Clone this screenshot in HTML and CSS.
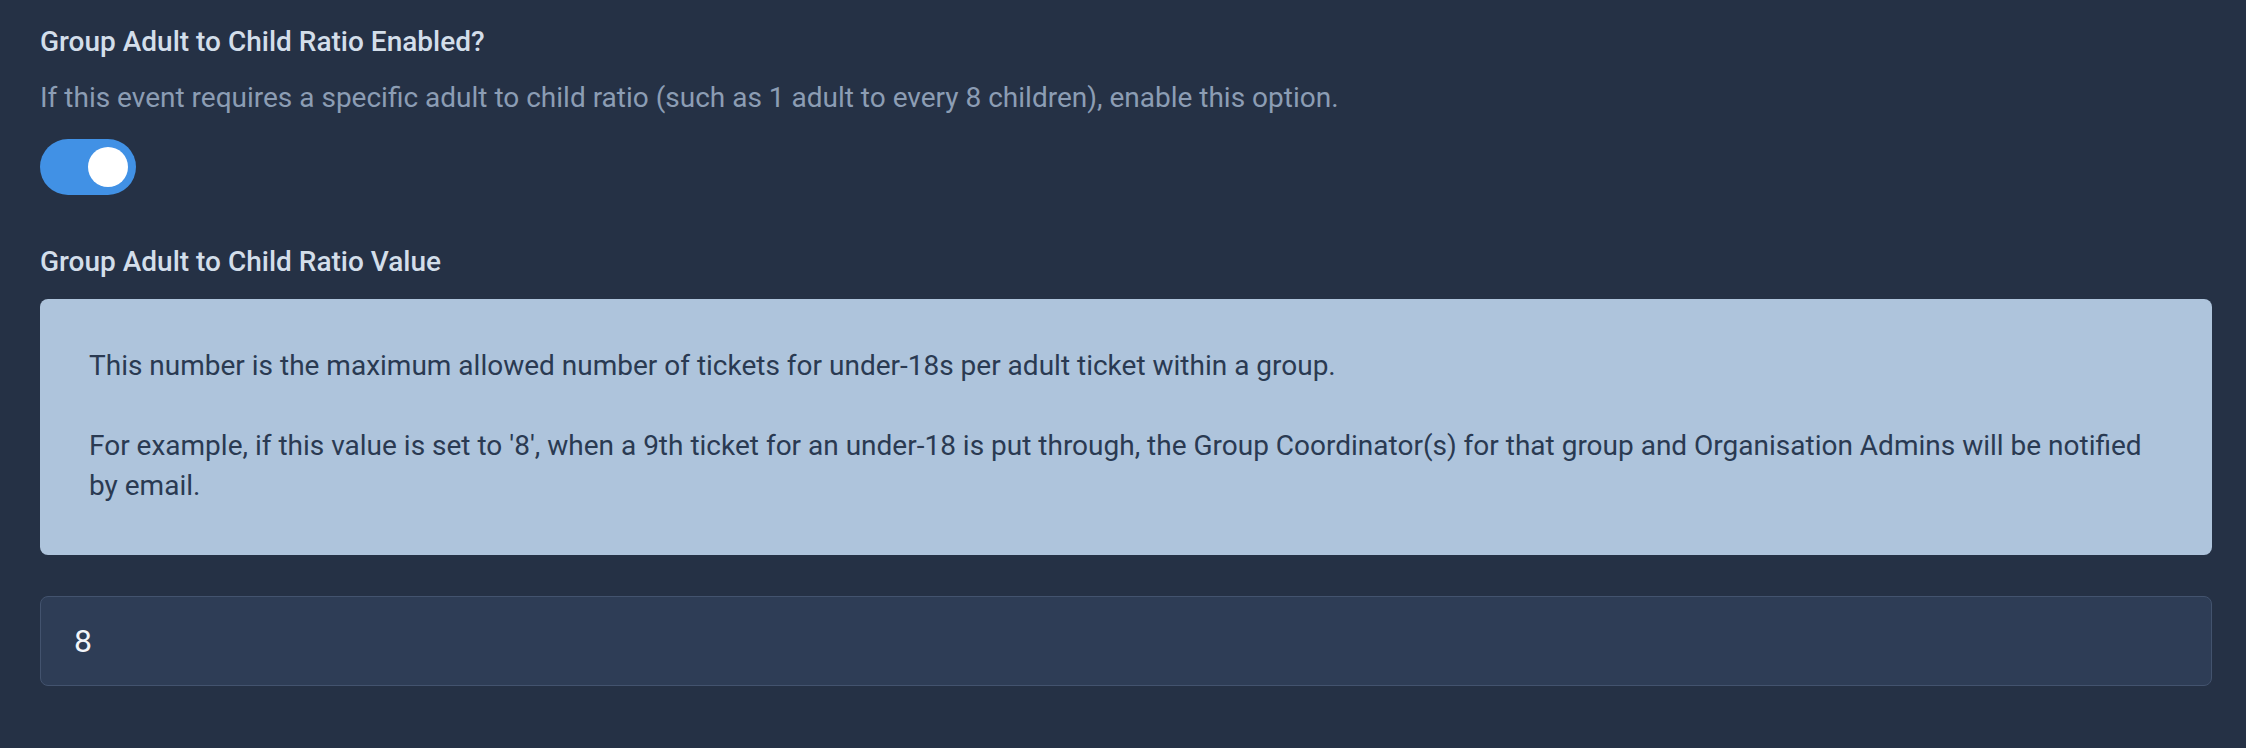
FILE: index.html
```html
<!DOCTYPE html>
<html lang="en">
<head>
<meta charset="utf-8">
<title>Group ratio settings</title>
<link rel="stylesheet" href="styles.css">
</head>
<body>
<main class="page">
  <section class="field field-toggle">
    <label class="field-label" for="ratio-enabled">Group Adult to Child Ratio Enabled?</label>
    <p class="field-help">If this event requires a specific adult to child ratio (such as 1 adult to every 8 children), enable this option.</p>
    <div class="switch" id="ratio-enabled" role="switch" aria-checked="true"><span class="switch-knob"></span></div>
  </section>
  <section class="field field-value">
    <label class="field-label" for="ratio-value">Group Adult to Child Ratio Value</label>
    <div class="info-box">
      <p class="info-para">This number is the maximum allowed number of tickets for under-18s per adult ticket within a group.</p>
      <p class="info-para">For example, if this value is set to '8', when a 9th ticket for an under-18 is put through, the Group Coordinator(s) for that group and Organisation Admins will be notified by email.</p>
    </div>
    <div class="text-input" id="ratio-value">8</div>
  </section>
</main>
</body>
</html>
```
FILE: styles.css
```css
html, body {
  margin: 0;
  padding: 0;
  background: #253145;
}
body {
  font-family: Roboto, "Liberation Sans", Arial, sans-serif;
  width: 2246px;
  height: 748px;
  overflow: hidden;
}
.page {
  padding: 22px 34px 0 40px;
  display: flex;
  flex-direction: column;
}
.field {
  display: flex;
  flex-direction: column;
}
.field-label {
  font-size: 28px;
  font-weight: 500;
  line-height: 40px;
  color: #d3deea;
}
.field-help {
  margin: 16px 0 0;
  font-size: 28px;
  line-height: 40px;
  color: #8c9db4;
}
.switch {
  margin-top: 21px;
  width: 96px;
  height: 56px;
  border-radius: 28px;
  background: #4191e5;
  display: flex;
  align-items: center;
  justify-content: flex-end;
  padding-right: 8px;
  box-sizing: border-box;
}
.switch-knob {
  width: 40px;
  height: 40px;
  border-radius: 50%;
  background: #ffffff;
}
.field-value {
  margin-top: 47px;
}
.info-box {
  margin-top: 17px;
  background: #aec4dc;
  border-radius: 8px;
  padding: 47px 48px 49px 49px;
  color: #2a3a52;
  font-size: 28px;
  line-height: 40px;
}
.info-para {
  margin: 0;
}
.info-para + .info-para {
  margin-top: 40px;
}
.text-input {
  margin-top: 41px;
  height: 90px;
  box-sizing: border-box;
  border: 1.67px solid #43536e;
  border-radius: 8px;
  background: #2e3d56;
  color: #f2f5f9;
  font-size: 32px;
  display: flex;
  align-items: center;
  padding-left: 33px;
}
```
